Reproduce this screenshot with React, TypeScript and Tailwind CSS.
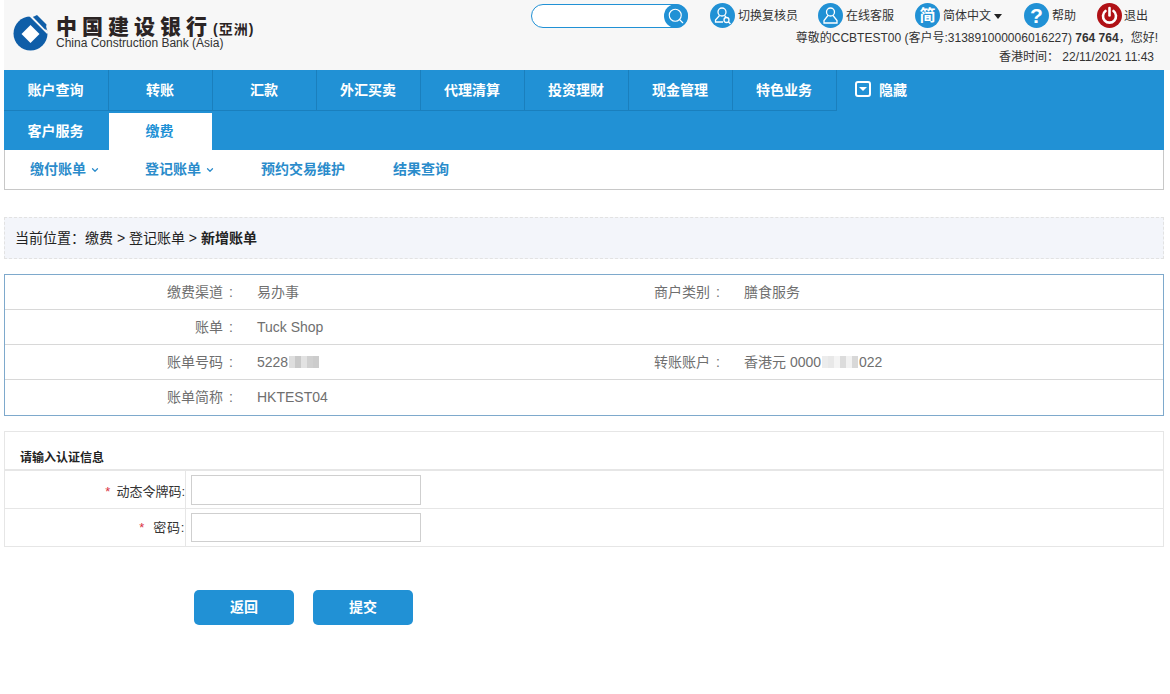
import type { ReactNode } from "react"
import { Search, ChevronDown } from "lucide-react"

const navRow1 = ["账户查询", "转账", "汇款", "外汇买卖", "代理清算", "投资理财", "现金管理", "特色业务"]

const Logo = () => (
  <svg width="36" height="38" viewBox="0 0 36 38" className="absolute left-[12px] top-[14px]">
    <circle cx="18.500" cy="19.500" r="17" fill="#0f5ea8" />
    <path d="M18.500 11 L27.500 20 L18.500 29 L9.500 20 Z" fill="white" />
    <path d="M17 0 L36 19" stroke="#f7f7f7" strokeWidth="2.500" />
    <path d="M21 0 L36 0 L36 12 Z" fill="#f7f7f7" />
    <path d="M21 3 L25 1 L34.500 10.500 L33.500 16 Z" fill="#0f5ea8" />
  </svg>
)

const Circle = ({ bg = "bg-[#2191d5]", children }: { bg?: string; children: ReactNode }) => (
  <div className={`flex h-[25px] w-[25px] items-center justify-center rounded-full ${bg} text-white`}>{children}</div>
)

const UserSearchIcon = () => (
  <svg width="19" height="19" viewBox="0 0 19 19" fill="none" stroke="white" strokeWidth="1.300">
    <circle cx="9" cy="6" r="4" />
    <path d="M6.500 9.500 L2.500 14 V16 H10" />
    <path d="M11.500 9.500 L13 11" />
    <circle cx="13.500" cy="14" r="2.500" />
    <path d="M15.300 15.800 L17.500 18" />
  </svg>
)

const UserIcon = () => (
  <svg width="19" height="19" viewBox="0 0 19 19" fill="none" stroke="white" strokeWidth="1.300">
    <circle cx="9.500" cy="6" r="4" />
    <path d="M7 9.500 L3 14.500 V17 H16 V14.500 L12 9.500" />
  </svg>
)

const PowerIcon = () => (
  <svg width="19" height="19" viewBox="0 0 19 19" fill="none" stroke="white" strokeWidth="2.600" strokeLinecap="round">
    <path d="M9.500 2 V9.500" />
    <path d="M5.500 5 A6.500 6.500 0 1 0 13.500 5" />
  </svg>
)

const Mosaic = ({ shades }: { shades: string[] }) => (
  <span className="mx-[1px] inline-flex h-[12px] align-[-1px] blur-[0.6px]">
    {shades.map((s, i) => (
      <span key={i} className={`h-full w-[6px] ${s}`} />
    ))}
  </span>
)

const InfoRow = ({ l1, v1, l2, v2, last }: { l1: string; v1: ReactNode; l2?: string; v2?: ReactNode; last?: boolean }) => (
  <div className={`flex h-[35px] items-center text-[14px] text-[#6f6f6f] ${last ? "pb-[1px]" : "border-b border-[#d8d8d8]"}`}>
    <div className="w-[218px] shrink-0 text-right">{l1}</div>
    <div className="w-[34px] shrink-0 pl-[6px]">:</div>
    <div className="w-[397px] shrink-0">{v1}</div>
    {l2 && <div className="w-[56px] shrink-0 whitespace-nowrap">{l2}</div>}
    {l2 && <div className="w-[34px] shrink-0 pl-[6px]">:</div>}
    {l2 && <div>{v2}</div>}
  </div>
)

export default function App() {
  return (
    <div className="relative h-[694px] w-[1170px] overflow-hidden bg-white [font-family:Liberation_Sans,Noto_Sans_CJK_SC,sans-serif]">
      {/* header */}
      <div className="absolute left-[4px] top-0 h-[70px] w-[1166px] bg-[#f7f7f7]" />
      <Logo />
      <div className="absolute left-[56px] top-[17px] whitespace-nowrap text-[21px] font-black leading-[20px] tracking-[5px] text-[#2b2424]">
        中国建设银行
      </div>
      <div className="absolute left-[213px] top-[21px] whitespace-nowrap text-[14px] font-bold leading-[17px] tracking-[1px] text-[#2b2424]">(亞洲)</div>
      <div className="absolute left-[56px] top-[37px] whitespace-nowrap text-[12px] leading-[13px] text-[#333]">China Construction Bank (Asia)</div>

      <div className="absolute left-[531px] top-[4px] flex h-[24px] w-[157px] rounded-full border border-[#2191d5] bg-white">
        <div className="absolute right-[-1px] top-[-1px] flex h-[24px] w-[24px] items-center justify-center rounded-full bg-[#2191d5]">
          <Search size={18} color="white" strokeWidth={1.500} />
        </div>
      </div>

      <div className="absolute left-[710px] top-[3px]"><Circle><UserSearchIcon /></Circle></div>
      <div className="absolute left-[738px] top-[8px] text-[12px] leading-[16px] text-[#333]">切换复核员</div>
      <div className="absolute left-[818px] top-[3px]"><Circle><UserIcon /></Circle></div>
      <div className="absolute left-[846px] top-[8px] text-[12px] leading-[16px] text-[#333]">在线客服</div>
      <div className="absolute left-[915px] top-[3px]"><Circle><span className="text-[16px] font-bold leading-none">简</span></Circle></div>
      <div className="absolute left-[943px] top-[8px] flex items-center text-[12px] leading-[16px] text-[#333]">
        简体中文
        <span className="ml-[3px] h-0 w-0 border-x-[4px] border-t-[5px] border-x-transparent border-t-[#222]" />
      </div>
      <div className="absolute left-[1024px] top-[3px]"><Circle><span className="text-[21px] font-bold leading-none">?</span></Circle></div>
      <div className="absolute left-[1052px] top-[8px] text-[12px] leading-[16px] text-[#333]">帮助</div>
      <div className="absolute left-[1097px] top-[3px]"><Circle bg="bg-[#b01116]"><PowerIcon /></Circle></div>
      <div className="absolute left-[1124px] top-[8px] text-[12px] leading-[16px] text-[#333]">退出</div>

      <div className="absolute right-[12px] top-[30px] whitespace-nowrap text-[12px] leading-[16px] text-[#333]">
        尊敬的CCBTEST00 (客户号:313891000006016227) <b>764 764</b>，您好!
      </div>
      <div className="absolute right-[16px] top-[49px] whitespace-nowrap text-[12px] leading-[16px] text-[#333]">
        香港时间： 22/11/2021 11:43
      </div>

      {/* main nav */}
      <div className="absolute left-[4px] top-[70px] h-[80px] w-[1160px] bg-[#2191d5]">
        <div className="flex h-[41px] w-[833px] border-b border-[#1a7fbd]">
          {navRow1.map((n, i) => (
            <div key={n} className={`flex ${i === 0 ? "w-[105px]" : "w-[104px]"} items-center justify-center border-r border-[#1a7fbd] pr-[1px] text-[14px] font-bold text-white`}>{n}</div>
          ))}
        </div>
        <div className="flex h-[39px]">
          <div className="flex w-[105px] items-center justify-center pr-[2px] pt-[1px] text-[14px] font-bold text-white">客户服务</div>
          <div className="mt-[2px] flex w-[103px] items-center justify-center bg-white pr-[2px] text-[14px] font-bold text-[#2191d5]">缴费</div>
        </div>
        <div className="absolute left-[851px] top-[11px] flex h-[16px] w-[16px] items-center justify-center rounded-[3px] border-2 border-white">
          <span className="h-0 w-0 border-x-[4px] border-t-[4px] border-x-transparent border-t-white" />
        </div>
        <div className="absolute left-[875px] top-0 flex h-[40px] items-center text-[14px] font-bold text-white">隐藏</div>
      </div>

      {/* sub nav */}
      <div className="absolute left-[4px] top-[150px] flex h-[40px] w-[1160px] items-center border-x border-b border-[#c8c8c8] bg-white text-[14px] font-bold text-[#2b8ccb]">
        <div className="absolute left-[25px] flex items-center">缴付账单<ChevronDown size={10} strokeWidth={3} className="ml-[4px]" /></div>
        <div className="absolute left-[140px] flex items-center">登记账单<ChevronDown size={10} strokeWidth={3} className="ml-[4px]" /></div>
        <div className="absolute left-[256px]">预约交易维护</div>
        <div className="absolute left-[388px]">结果查询</div>
      </div>

      {/* breadcrumb */}
      <div className="absolute left-[4px] top-[217px] flex h-[42px] w-[1160px] items-center border border-dashed border-[#e2e2e2] bg-[#f3f5fa] pl-[10px] text-[14px] text-[#222]">
        当前位置：缴费 &gt; 登记账单 &gt;&nbsp;<b>新增账单</b>
      </div>

      {/* info table */}
      <div className="absolute left-[4px] top-[274px] h-[142px] w-[1160px] border border-[#7ea9cc] bg-white">
        <InfoRow l1="缴费渠道" v1="易办事" l2="商户类别" v2="膳食服务" />
        <InfoRow l1="账单" v1="Tuck Shop" />
        <InfoRow
          l1="账单号码"
          v1={<>5228<Mosaic shades={["bg-[#dedede]", "bg-[#c9c9c9]", "bg-[#e2e2e2]", "bg-[#d0d0d0]", "bg-[#cccccc]"]} /></>}
          l2="转账账户"
          v2={<>香港元 0000<Mosaic shades={["bg-[#ececec]", "bg-[#e8e8e8]", "bg-[#f4f4f4]", "bg-[#dcdcdc]", "bg-[#f2f2f2]", "bg-[#d8d8d8]"]} />022</>}
        />
        <InfoRow l1="账单简称" v1="HKTEST04" last />
      </div>

      {/* auth form */}
      <div className="absolute left-[4px] top-[431px] h-[116px] w-[1160px] border border-[#e6e6e6] bg-white">
        <div className="flex h-[39px] items-end border-b-2 border-[#e6e6e6] pb-[2px] pl-[15px] text-[12px] font-bold text-[#222]">请输入认证信息</div>
        <div className="flex h-[38px] border-b border-[#e6e6e6]">
          <div className="flex w-[181px] items-center justify-end border-r border-[#e6e6e6] pt-[4px] text-[13px] text-[#333]">
            <span className="mr-[6px] text-[#d9333f]">*</span>动态令牌码:
          </div>
          <div className="ml-[5px] mt-[4px] h-[30px] w-[230px] border border-[#cfcfcf]" />
        </div>
        <div className="flex h-[37px]">
          <div className="flex w-[181px] items-center justify-end border-r border-[#e6e6e6] text-[13px] text-[#333]">
            <span className="mr-[9px] text-[#d9333f]">*</span><span className="tracking-[0.700px]">密码:</span>
          </div>
          <div className="ml-[5px] mt-[4px] h-[29px] w-[230px] border border-[#cfcfcf]" />
        </div>
      </div>

      {/* buttons */}
      <div className="absolute left-[194px] top-[590px] flex gap-[19px]">
        <button className="h-[35px] w-[100px] rounded-[5px] bg-[#2191d5] text-[14px] font-bold text-white">返回</button>
        <button className="h-[35px] w-[100px] rounded-[5px] bg-[#2191d5] text-[14px] font-bold text-white">提交</button>
      </div>
    </div>
  )
}
